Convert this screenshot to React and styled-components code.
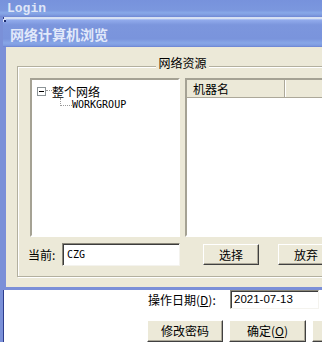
import React from 'react';
import styled, { createGlobalStyle } from 'styled-components';

const GlobalStyle = createGlobalStyle`
  html, body {
    margin: 0;
    padding: 0;
  }
  body {
    font-family: "Noto Sans CJK SC", "Liberation Sans", sans-serif;
    font-size: 12px;
    color: #000;
  }
`;

// Desktop area holding both windows
const Screen = styled.div`
  position: relative;
  width: 322px;
  height: 342px;
  overflow: hidden;
  background: #7a90d8;
`;

const LoginWindow = styled.div`
  display: flex;
  flex-direction: column;
  height: 100%;
`;

const LoginTitle = styled.div`
  height: 19px;
  box-sizing: border-box;
  padding-left: 7px;
  background: linear-gradient(to bottom, #7792dc 0%, #7b97de 60%, #88a8e8 75%, #7f9ce0 88%, #6f87d3 100%);
  font-family: "Liberation Mono", monospace;
  font-weight: bold;
  font-size: 13px;
  line-height: 17px;
  color: #dfe6f7;
`;

const LoginBody = styled.div`
  flex: 1;
  margin-left: 3px;
  border-left: 1px solid #2d3c8c;
  background: linear-gradient(to bottom, #d6e0f3 0%, #eef2fa 40%, #ffffff 70%);
  padding: 273px 0 0 143px;
`;

const FormRow = styled.div`
  display: flex;
  align-items: center;
  gap: ${(props) => props.gap || 0}px;
  margin-top: ${(props) => props.top || 0}px;
`;

const FieldLabel = styled.span`
  width: ${(props) => props.width}px;
  margin-left: ${(props) => props.offset || 0}px;
  white-space: nowrap;
  line-height: 14px;
`;

const Sunken = styled.div`
  box-sizing: border-box;
  background: #fff;
  border: 1px solid;
  border-color: #8a877a #f4f3ee #f4f3ee #8a877a;
  box-shadow: inset 1px 1px 0 #3c3c3c;
`;

const DateInput = styled(Sunken)`
  width: 89px;
  height: 19px;
  margin-left: 4px;
  padding-left: 3px;
  font-family: "Liberation Sans", sans-serif;
  font-size: 11.5px;
  line-height: 17px;
`;

const Button = styled.button`
  box-sizing: border-box;
  width: ${(props) => props.width || 56}px;
  height: ${(props) => props.height || 21}px;
  margin: 0 0 0 ${(props) => props.offset || 0}px;
  padding: 0;
  flex-shrink: 0;
  background: #ece9d8;
  border: 1px solid;
  border-color: #ffffff #404040 #404040 #ffffff;
  box-shadow: inset -1px -1px 0 #aca899;
  font-family: "Noto Sans CJK SC", sans-serif;
  font-size: 12px;
  line-height: 14px;
  color: #000;
`;

// Modal dialog window, floating over the login window
const Dialog = styled.div`
  position: absolute;
  top: 19px;
  left: 3px;
  width: 360px;
  height: 271px;
  box-sizing: border-box;
  display: flex;
  flex-direction: column;
  padding: 0 3px 3px 3px;
  background: #7b8fd8;
  border-top: 1px solid #a9bef0;

  &::before {
    content: '';
    position: absolute;
    top: -1px;
    left: 0;
    width: 3px;
    height: 3px;
    background: #1c2a6c;
    box-shadow: inset 1px 1px 0 #d8e0f8;
  }
`;

const DialogTitle = styled.div`
  height: 27px;
  flex-shrink: 0;
  display: flex;
  align-items: center;
  margin: 0 -3px;
  padding-left: 7px;
  background: linear-gradient(to bottom, #92abec 0%, #7c96dd 18%, #7a94dc 70%, #87a6e7 85%, #7e9be0 94%, #6a82d1 100%);
  font-weight: bold;
  font-size: 14px;
  color: #e2e9fa;
`;

const DialogContent = styled.div`
  flex: 1;
  background: #ece9d8;
  padding: 9px 0 0 11px;
`;

const GroupBox = styled.fieldset`
  margin: 0;
  width: 330px;
  box-sizing: border-box;
  padding: 2px 12px 10px 12px;
  border: 1px solid #b3b09f;
  box-shadow: inset 1px 1px 0 #ffffff, 1px 1px 0 #ffffff;
`;

const Legend = styled.legend`
  margin: 0 auto;
  padding: 0 2px 6px;
  line-height: 14px;
  background: #ece9d8;
`;

const Panes = styled.div`
  display: flex;
  gap: 5px;
  height: 159px;
`;

const TreeView = styled(Sunken)`
  width: 150px;
  padding: 4px 5px;
  border-width: 2px;
  border-color: #a5a294 #fff #fff #a5a294;
  box-shadow: none;
`;

const TreeRow = styled.div`
  display: flex;
  align-items: center;
  height: 14px;
`;

const ExpandBox = styled.span`
  position: relative;
  width: 9px;
  height: 9px;
  box-sizing: border-box;
  border: 1px solid #8c9497;
  background: #fff;

  &::after {
    content: '';
    position: absolute;
    left: 1px;
    top: 3px;
    width: 5px;
    height: 1px;
    background: #000;
  }
`;

const DotLine = styled.span`
  width: ${(props) => props.width}px;
  height: 1px;
  border-top: 1px dotted #9a9a9a;
`;

const ChildRow = styled.div`
  display: flex;
  align-items: flex-end;
  height: 12px;
  margin-left: 23px;
`;

const Elbow = styled.span`
  width: 11px;
  height: 7px;
  margin-bottom: 4px;
  border-left: 1px dotted #9a9a9a;
  border-bottom: 1px dotted #9a9a9a;
`;

const MonoText = styled.span`
  font-family: "DejaVu Sans Mono", "Liberation Mono", monospace;
  font-size: 10px;
  line-height: 11px;
`;

const ListView = styled(TreeView)`
  padding: 0;
`;

const ListHeader = styled.div`
  display: flex;
  height: 17px;
  background: #ece9d8;
  border-bottom: 1px solid #aca899;
`;

const HeaderCell = styled.div`
  width: ${(props) => props.width}px;
  box-sizing: border-box;
  padding-left: 6px;
  line-height: 17px;
  border-right: 1px solid #aca899;
  box-shadow: 1px 0 0 #fff;
`;

const CurrentRow = styled.div`
  display: flex;
  align-items: center;
  margin-top: 6px;
  height: 23px;
`;

const TextInput = styled(Sunken)`
  width: 118px;
  height: 23px;
  padding-left: 4px;
  display: flex;
  align-items: center;
`;

const App = () => {
  return (
    <>
      <GlobalStyle />
      <Screen>
        <LoginWindow>
          <LoginTitle>Login</LoginTitle>
          <LoginBody>
            <FormRow>
              <FieldLabel width={78} offset={1}>操作日期(<u>D</u>):</FieldLabel>
              <DateInput>2021-07-13</DateInput>
            </FormRow>
            <FormRow top={11} gap={6}>
              <Button width={76} height={22}>修改密码</Button>
              <Button width={77} height={22}>确定(<u>O</u>)</Button>
              <Button width={77} height={22} />
            </FormRow>
          </LoginBody>
        </LoginWindow>

        <Dialog>
          <DialogTitle>网络计算机浏览</DialogTitle>
          <DialogContent>
            <GroupBox>
              <Legend>网络资源</Legend>
              <Panes>
                <TreeView>
                  <TreeRow>
                    <ExpandBox />
                    <DotLine width={6} />
                    <span>整个网络</span>
                  </TreeRow>
                  <ChildRow>
                    <Elbow />
                    <MonoText>WORKGROUP</MonoText>
                  </ChildRow>
                </TreeView>
                <ListView>
                  <ListHeader>
                    <HeaderCell width={98}>机器名</HeaderCell>
                  </ListHeader>
                </ListView>
              </Panes>
              <CurrentRow>
                <FieldLabel width={34} offset={-2}>当前:</FieldLabel>
                <TextInput>
                  <MonoText>CZG</MonoText>
                </TextInput>
                <Button offset={23}>选择</Button>
                <Button offset={19}>放弃</Button>
              </CurrentRow>
            </GroupBox>
          </DialogContent>
        </Dialog>
      </Screen>
    </>
  );
};

export default App;
